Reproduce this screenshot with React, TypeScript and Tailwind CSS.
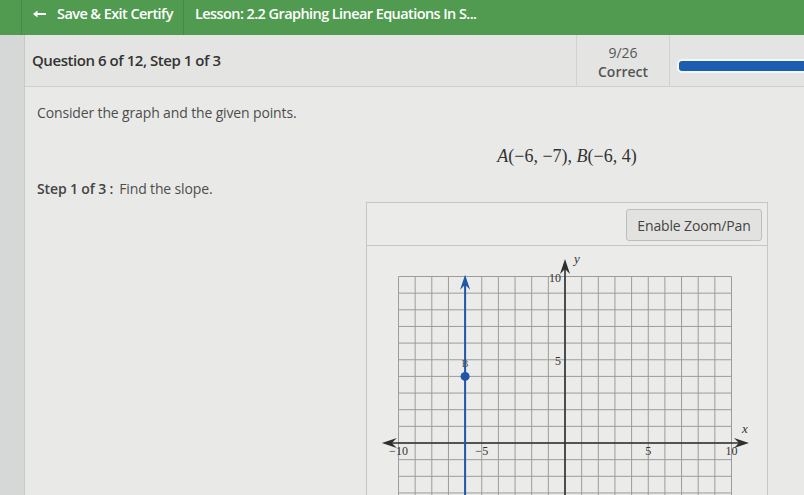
import React from "react";

const U = 16.65;
const OX = 198;
const OY = 197;
const px = (x: number) => OX + x * U;
const py = (y: number) => OY - y * U;

function Graph() {
  const vlines = [];
  for (let i = -10; i <= 10; i++) {
    vlines.push(
      <line key={"v" + i} x1={px(i)} y1={py(10)} x2={px(i)} y2={260} stroke="#9c9c9c" strokeWidth={1} />
    );
  }
  const hlines = [];
  for (let j = 10; j >= -4; j--) {
    hlines.push(
      <line key={"h" + j} x1={px(-10)} y1={py(j)} x2={px(10)} y2={py(j)} stroke="#9c9c9c" strokeWidth={1} />
    );
  }
  const serif = { fontFamily: '"Liberation Serif", serif' };
  return (
    <svg width={402} height={250} className="block">
      {vlines}
      {hlines}
      <line x1={px(-10.7)} y1={OY} x2={px(10.7)} y2={OY} stroke="#2f2f2f" strokeWidth={1.6} />
      <line x1={OX} y1={py(10.6)} x2={OX} y2={260} stroke="#2f2f2f" strokeWidth={1.6} />
      <polygon points={`${px(-11)},${OY} ${px(-10.1)},${OY - 5} ${px(-10.4)},${OY} ${px(-10.1)},${OY + 5}`} fill="#2f2f2f" />
      <polygon points={`${px(11.05)},${OY} ${px(10.15)},${OY - 5} ${px(10.45)},${OY} ${px(10.15)},${OY + 5}`} fill="#2f2f2f" />
      <polygon points={`${OX},${py(11.05)} ${OX - 5},${py(10.15)} ${OX},${py(10.45)} ${OX + 5},${py(10.15)}`} fill="#2f2f2f" />
      <line x1={px(-6)} y1={py(9.7)} x2={px(-6)} y2={260} stroke="#1f56a8" strokeWidth={2} />
      <polygon points={`${px(-6)},${py(10.1)} ${px(-6) - 5},${py(9.2)} ${px(-6)},${py(9.5)} ${px(-6) + 5},${py(9.2)}`} fill="#1f56a8" />
      <circle cx={px(-6)} cy={py(4)} r={4.5} fill="#1f56a8" />
      <text x={px(-6)} y={py(4.55)} textAnchor="middle" fontSize={10} fill="#555" style={serif}>B</text>
      <text x={px(-10)} y={OY + 12} textAnchor="middle" fontSize={12} fill="#333" style={serif}>−10</text>
      <text x={px(-5)} y={OY + 12} textAnchor="middle" fontSize={12} fill="#333" style={serif}>−5</text>
      <text x={px(5)} y={OY + 12} textAnchor="middle" fontSize={12} fill="#333" style={serif}>5</text>
      <text x={px(10)} y={OY + 12} textAnchor="middle" fontSize={12} fill="#333" style={serif}>10</text>
      <text x={OX - 7} y={py(5) + 5} textAnchor="middle" fontSize={12} fill="#333" style={serif}>5</text>
      <text x={OX - 10} y={py(10) + 5} textAnchor="middle" fontSize={12} fill="#333" style={serif}>10</text>
      <text x={OX + 12} y={py(10.8)} textAnchor="middle" fontSize={13} fill="#333" fontStyle="italic" style={serif}>y</text>
      <text x={px(10.8)} y={OY - 10} textAnchor="middle" fontSize={13} fill="#333" fontStyle="italic" style={serif}>x</text>
    </svg>
  );
}

export default function App() {
  return (
    <div
      className="w-[804px] h-[495px] overflow-hidden flex flex-col bg-[#e9eae8] text-[#4a4a4a]"
      style={{ fontFamily: '"Open Sans", sans-serif' }}
    >
      <div className="h-[35px] shrink-0 bg-[#509b50] flex items-stretch text-white text-[14.5px] font-semibold tracking-[-0.04em]">
        <div className="w-[22px] h-full border-r border-[#468a46]" />
        <div className="h-full flex items-center pb-[8px] gap-[11px] pl-[11px] w-[162px] border-r border-[#468a46]">
          <svg width="13" height="8" viewBox="0 0 13 8" className="shrink-0">
            <path d="M1 4 H13" stroke="white" strokeWidth="2" />
            <path d="M0 4 L4.5 0.5 L4.5 7.5 Z" fill="white" />
          </svg>
          <span>Save &amp; Exit Certify</span>
        </div>
        <div className="pl-[11px] flex items-center pb-[8px]">Lesson: 2.2 Graphing Linear Equations In S...</div>
      </div>
      <div className="flex flex-1 min-h-0">
        <div className="w-[25px] shrink-0 bg-[#d5d8d6] border-r border-[#c8cac8]" />
        <div className="flex-1 flex flex-col min-w-0">
          <div className="h-[52px] shrink-0 flex bg-[#e4e5e3] border-b border-[#cfd0ce]">
            <div className="flex-1 flex items-center pl-[7px] text-[15px] font-semibold text-[#333] tracking-[-0.03em]">
              Question 6 of 12, Step 1 of 3
            </div>
            <div className="w-[93px] border-l border-[#d2d3d1] flex flex-col items-center justify-center pt-[2px] text-[14px] leading-[19px] font-semibold text-[#555]">
              <span className="font-normal">9/26</span>
              <span>Correct</span>
            </div>
            <div className="w-[135px] border-l border-[#d2d3d1] flex items-center pl-[9px] pt-[10px]">
              <div className="h-[10px] flex-1 rounded-l-[3px] bg-[#1c5db0] ring-2 ring-[#f4f6f8]" />
            </div>
          </div>
          <div className="flex flex-1 min-h-0">
            <div className="w-[341px] shrink-0 pl-[12px] pt-[16px] text-[14px] tracking-[-0.01em] text-[#4d4d4d]">
              <p className="leading-[20px]">Consider the graph and the given points.</p>
              <p className="mt-[56px] leading-[20px]">
                <span className="font-semibold text-[#444]">Step 1 of 3 :</span>
                <span className="ml-[6px]">Find the slope.</span>
              </p>
            </div>
            <div className="flex-1 min-w-0">
              <div className="w-[402px] text-center pt-[56px] h-[115px]">
                <span
                  className="text-[18px] text-[#333]"
                  style={{ fontFamily: '"Liberation Serif", serif' }}
                >
                  <i>A</i>(−6, −7), <i>B</i>(−6, 4)
                </span>
              </div>
              <div className="w-[402px] h-[300px] border border-[#c6c7c5] bg-[#ebebea]">
                <div className="h-[43px] border-b border-[#c6c7c5] flex items-center justify-end pr-[5px] pt-[2px]">
                  <div className="h-[32px] w-[136px] rounded-[3px] border border-[#bdbebc] bg-[#e2e3e1] flex items-center justify-center text-[14px] tracking-[-0.01em] text-[#444]">
                    Enable Zoom/Pan
                  </div>
                </div>
                <Graph />
              </div>
            </div>
          </div>
        </div>
      </div>
    </div>
  );
}
